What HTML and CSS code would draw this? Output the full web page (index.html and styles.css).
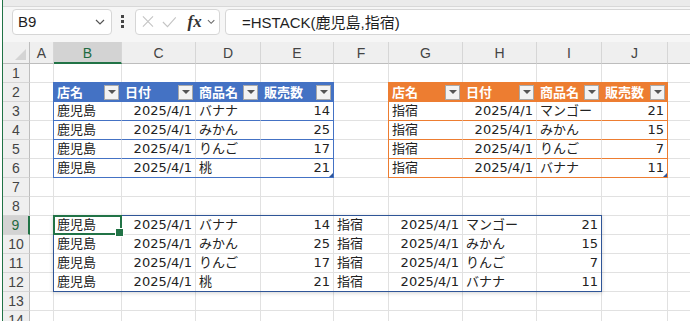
FILE: index.html
```html
<!DOCTYPE html>
<html lang="ja">
<head>
    <meta charset="UTF-8">
    <title>HSTACK</title>
    <link rel="stylesheet" href="styles.css">
</head>
<body>
    <div class="app">
        <div class="ribbon-edge"></div>

        <!-- 数式バー -->
        <div class="formula-bar">
            <div class="name-box">
                <span>B9</span>
                <svg class="chevron" width="10" height="6" viewBox="0 0 10 6"><path d="M1 1l4 4 4-4" fill="none" stroke="#555" stroke-width="1.2"/></svg>
            </div>
            <div class="grip"><i></i><i></i><i></i></div>
            <div class="fx-box">
                <svg width="13" height="13" viewBox="0 0 13 13"><path d="M1 1l11 11M12 1L1 12" stroke="#c4c4c4" stroke-width="1.2"/></svg>
                <svg width="16" height="12" viewBox="0 0 16 12"><path d="M1 6l5 5L15 1" fill="none" stroke="#c4c4c4" stroke-width="1.2"/></svg>
                <span class="fx">fx</span>
                <svg class="chevron" width="9" height="6" viewBox="0 0 9 6"><path d="M1 1l3.5 3.5L8 1" fill="none" stroke="#666" stroke-width="1.1"/></svg>
            </div>
            <div class="formula-input">=HSTACK(鹿児島,指宿)</div>
        </div>

        <!-- シート -->
        <div class="sheet" id="sheet">
            <div class="corner"></div>
            <div class="frame frame-blue"></div>
            <div class="frame frame-orange"></div>
            <div class="spill"></div>
            <div class="active-cell"></div>
        </div>
    </div>

    <script>
        const sheet = document.getElementById('sheet');
        const letters = ['A', 'B', 'C', 'D', 'E', 'F', 'G', 'H', 'I', 'J', ''];

        const head = ['店名', '日付', '商品名', '販売数'];
        const kagoshima = [
            ['鹿児島', '2025/4/1', 'バナナ', 14],
            ['鹿児島', '2025/4/1', 'みかん', 25],
            ['鹿児島', '2025/4/1', 'りんご', 17],
            ['鹿児島', '2025/4/1', '桃', 21]
        ];
        const ibusuki = [
            ['指宿', '2025/4/1', 'マンゴー', 21],
            ['指宿', '2025/4/1', 'みかん', 15],
            ['指宿', '2025/4/1', 'りんご', 7],
            ['指宿', '2025/4/1', 'バナナ', 11]
        ];

        // 列見出し
        letters.forEach((l) => {
            const h = document.createElement('div');
            h.className = 'col-head' + (l === 'B' ? ' selected' : '');
            h.textContent = l;
            sheet.appendChild(h);
        });

        // セルの中身を決める
        function cellFor(r, c) {
            // テーブル1: B2:E6 / テーブル2: G2:J6
            for (const [start, rows, color] of [[1, kagoshima, 'blue'], [6, ibusuki, 'orange']]) {
                const k = c - start;
                if (k >= 0 && k < 4 && r >= 2 && r <= 6) {
                    if (r === 2) return { head: head[k], color };
                    return { text: rows[r - 3][k], num: k === 1 || k === 3, color };
                }
            }
            // スピル範囲: B9:I12
            if (r >= 9 && r <= 12 && c >= 1 && c <= 8) {
                const src = c <= 4 ? kagoshima : ibusuki;
                const k = (c - 1) % 4;
                return { text: src[r - 9][k], num: k === 1 || k === 3 };
            }
            return null;
        }

        for (let r = 1; r <= 14; r++) {
            const rh = document.createElement('div');
            rh.className = 'row-head' + (r === 9 ? ' selected' : '');
            rh.textContent = r;
            sheet.appendChild(rh);

            letters.forEach((l, c) => {
                const cell = document.createElement('div');
                cell.className = 'cell';
                const info = cellFor(r, c);
                if (info && info.head) {
                    cell.classList.add('th', 'th-' + info.color);
                    cell.innerHTML = `<span>${info.head}</span><span class="filter"></span>`;
                } else if (info) {
                    cell.textContent = info.text;
                    if (info.num) cell.classList.add('num');
                    if (info.color) cell.classList.add('td-' + info.color);
                }
                sheet.appendChild(cell);
            });
        }
    </script>
</body>
</html>
```

FILE: styles.css
```css
* {
    margin: 0;
    padding: 0;
    box-sizing: border-box;
}

body {
    background: #fff;
    overflow: hidden;
    font-family: "Liberation Sans", "Noto Sans CJK JP", sans-serif;
    color: #222;
}

.app {
    margin-left: 2px;
    border-left: 1px solid #217346;
    height: 321px;
    overflow: hidden;
    background: #f6f6f6;
}

.ribbon-edge {
    height: 7px;
    background: #ebebeb;
    border-bottom: 1px solid #d8d8d8;
}

/* 数式バー */
.formula-bar {
    display: flex;
    align-items: center;
    height: 35px;
    padding: 1px 0 7px 9px;
}

.name-box,
.fx-box,
.formula-input {
    height: 26px;
    background: #fff;
    border: 1px solid #d6d6d6;
    border-radius: 4px;
    display: flex;
    align-items: center;
}

.name-box {
    width: 100px;
    padding: 0 6px 0 5px;
    justify-content: space-between;
    font-size: 15px;
    color: #1f1f1f;
}

.grip {
    width: 4px;
    margin: 0 10px 0 9px;
    display: flex;
    flex-direction: column;
    gap: 2px;
}

.grip i {
    width: 3px;
    height: 3px;
    background: #444;
}

.fx-box {
    width: 85px;
    padding: 0 4px 0 6px;
    gap: 8px;
}

.fx {
    font-family: "Liberation Serif", serif;
    font-style: italic;
    font-weight: bold;
    font-size: 17px;
    color: #333;
    margin-left: 3px;
    margin-right: -3px;
}

.formula-input {
    flex: 1;
    margin-left: 5px;
    margin-right: -10px;
    padding-left: 16px;
    font-size: 15px;
    color: #1f1f1f;
}

/* シート */
.sheet {
    position: relative;
    display: grid;
    grid-template-columns: 27px 24px 68px 74px 65px 73px 55px 74px 74px 65px 66px 70px;
    grid-template-rows: 22px repeat(14, 19px);
    width: 720px;
    background: #fff;
    font-family: "DejaVu Sans", "Noto Sans CJK JP", sans-serif;
    font-size: 13px;
}

.corner {
    background: #efefef;
    border-right: 1px solid #bdbdbd;
    border-bottom: 1px solid #bdbdbd;
    position: relative;
}

.corner::after {
    content: "";
    position: absolute;
    right: 3px;
    bottom: 3px;
    border-left: 11px solid transparent;
    border-bottom: 11px solid #d4d4d4;
}

.col-head,
.row-head {
    background: #efefef;
    color: #444;
    font-family: "Liberation Sans", sans-serif;
    font-size: 14px;
    display: flex;
    align-items: center;
    justify-content: center;
}

.col-head {
    border-right: 1px solid #d6d6d6;
    border-bottom: 1px solid #bdbdbd;
    padding-top: 1px;
}

.col-head.selected {
    background: #d3d3d3;
    color: #1e6b41;
    border-bottom: 2px solid #217346;
}

.row-head {
    border-right: 1px solid #bdbdbd;
    border-bottom: 1px solid #d6d6d6;
}

.row-head.selected {
    background: #d3d3d3;
    color: #1e6b41;
    border-right: 2px solid #217346;
}

.cell {
    border-right: 1px solid #e1e1e1;
    border-bottom: 1px solid #e1e1e1;
    padding: 0 3px;
    line-height: 18px;
    white-space: nowrap;
}

.cell.num {
    text-align: right;
}

/* テーブル見出し */
.th {
    display: flex;
    align-items: center;
    justify-content: space-between;
    padding-right: 2px;
    color: #fff;
    font-family: "Noto Sans CJK JP", sans-serif;
    font-weight: bold;
}

.th-blue {
    background: #4472c4;
    border-color: #4472c4;
}

.th-orange {
    background: #ed7d31;
    border-color: #ed7d31;
}

.filter {
    width: 15px;
    height: 15px;
    background: #f3f3f3;
    border: 1px solid #a9a9a9;
    display: flex;
    align-items: center;
    justify-content: center;
}

.filter::after {
    content: "";
    border-left: 4px solid transparent;
    border-right: 4px solid transparent;
    border-top: 4px solid #555;
}

.td-blue {
    border-bottom-color: #4472c4;
}

.td-orange {
    border-bottom-color: #ed7d31;
}

/* 枠とハイライト (グリッド領域の上に重ねる) */
.frame,
.spill,
.active-cell {
    position: absolute;
    top: -1px;
    left: -1px;
    right: 0;
    bottom: 0;
    pointer-events: none;
}

.frame-blue {
    grid-area: 3 / 3 / 8 / 7;
    border: 1px solid #4472c4;
}

.frame-orange {
    grid-area: 3 / 8 / 8 / 12;
    border: 1px solid #ed7d31;
}

.frame::after {
    content: "";
    position: absolute;
    right: 0;
    bottom: 0;
    border-left: 4px solid transparent;
    border-bottom: 4px solid #2f5597;
}

.spill {
    grid-area: 10 / 3 / 14 / 11;
    border: 1px solid #2f5597;
    box-shadow: 0 1px 4px rgba(0, 0, 0, 0.18);
}

.active-cell {
    grid-area: 10 / 3 / 11 / 4;
    border: 2px solid #217346;
}

.active-cell::after {
    content: "";
    position: absolute;
    right: -4px;
    bottom: -4px;
    width: 7px;
    height: 7px;
    background: #217346;
    border: 1px solid #fff;
}
```
